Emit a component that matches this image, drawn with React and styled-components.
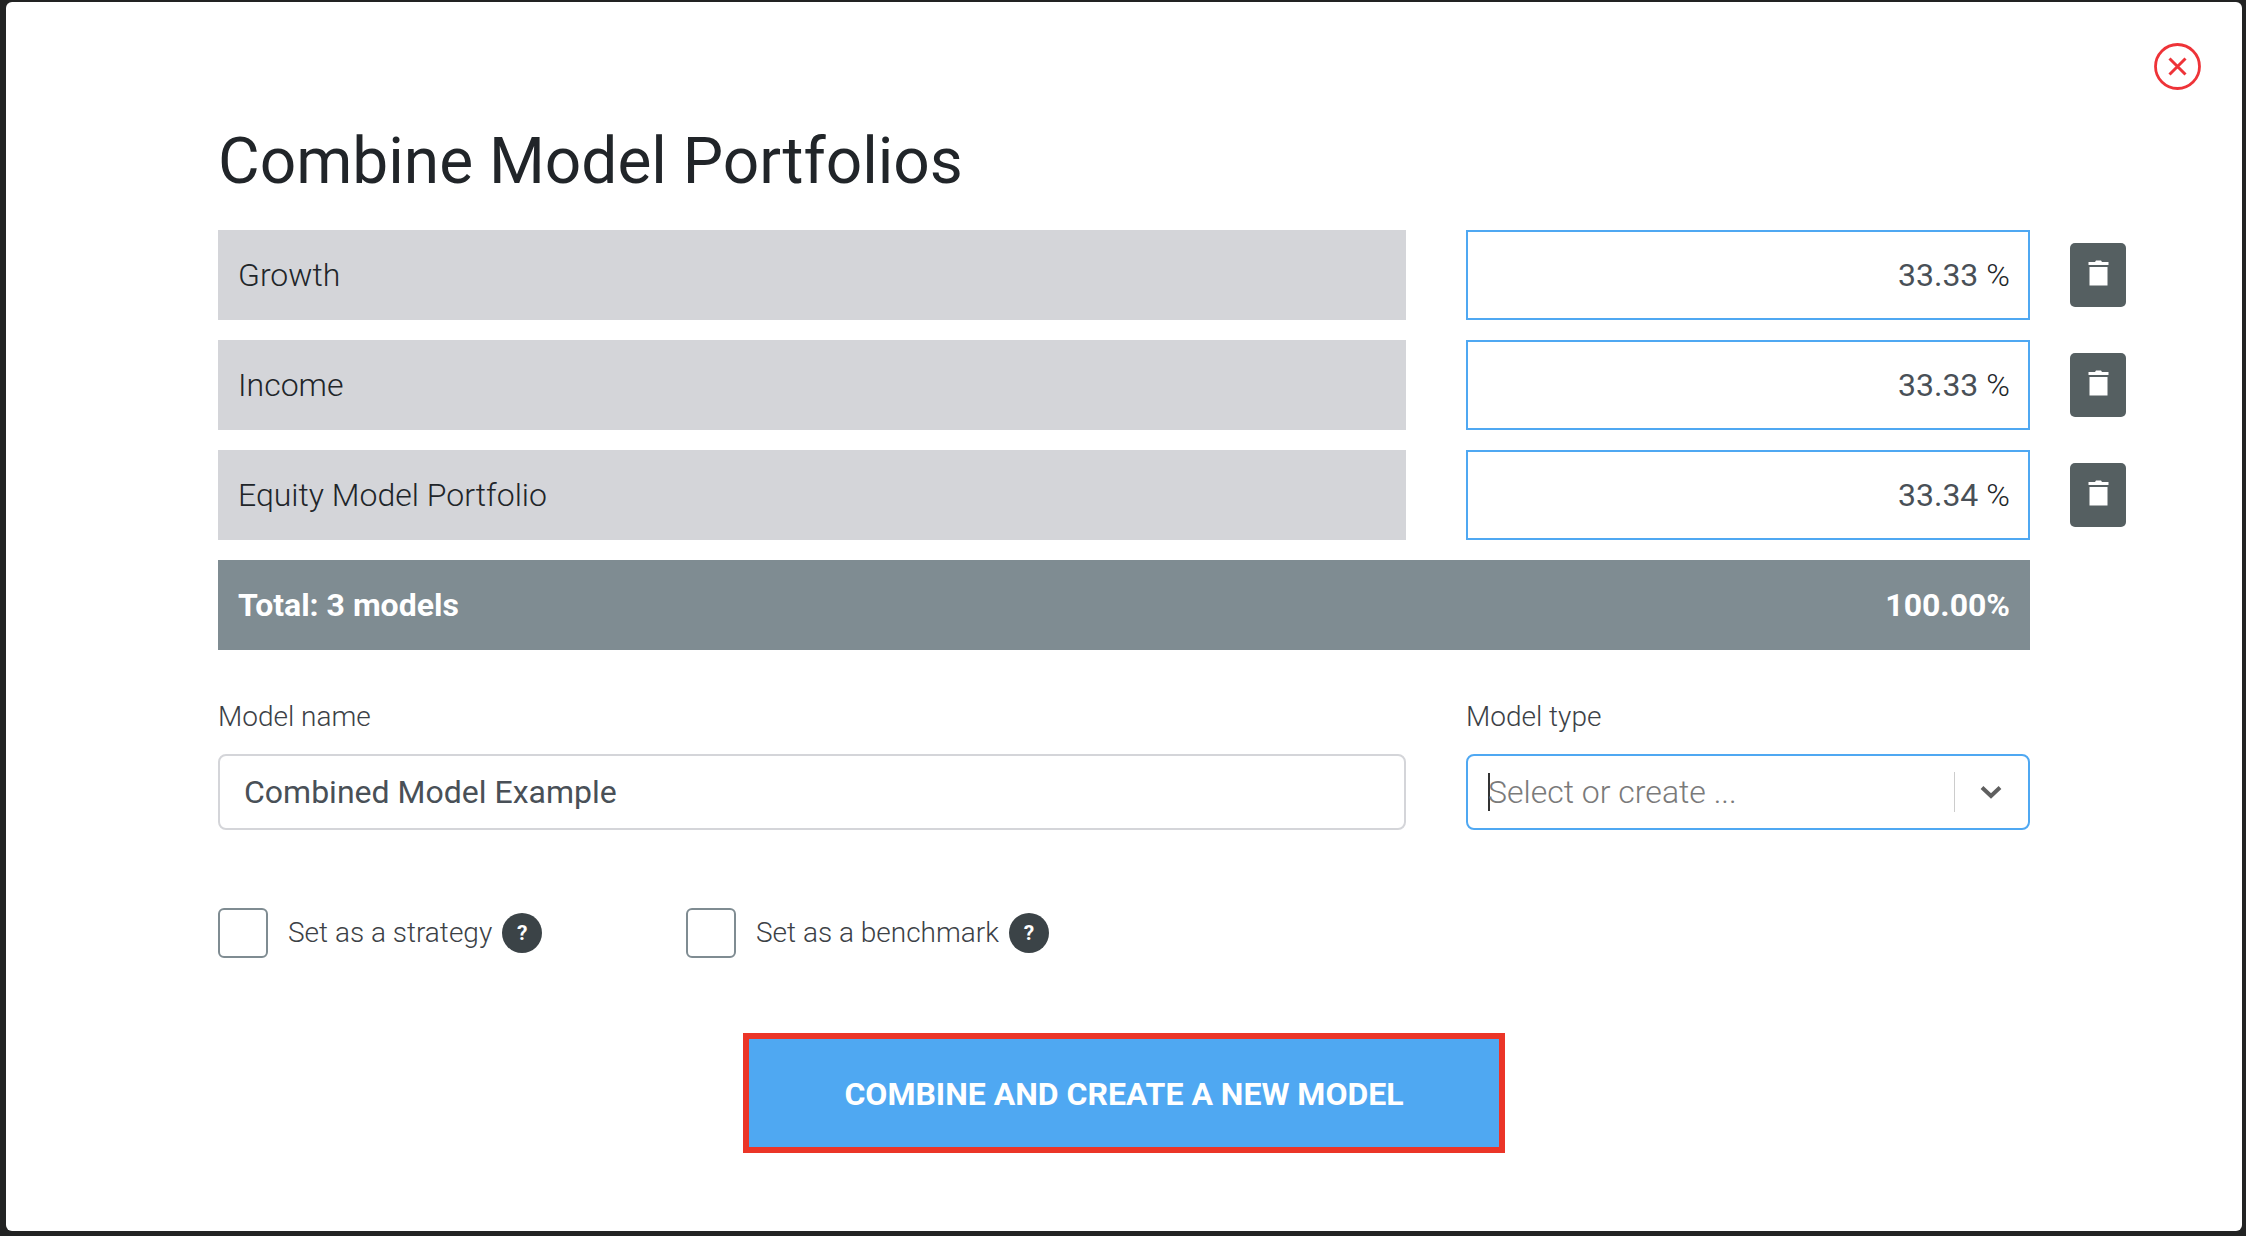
import styled, { createGlobalStyle } from 'styled-components';

const rows = [
    { name: 'Growth', weight: '33.33' },
    { name: 'Income', weight: '33.33' },
    { name: 'Equity Model Portfolio', weight: '33.34' },
];

export default function App() {
    return (
        <>
            <GlobalStyle />
            <Modal>
                <CloseButton aria-label="Close">
                    <svg width="47" height="47" viewBox="0 0 47 47" fill="none" stroke="#ee3338">
                        <circle cx="23.5" cy="23.5" r="22" strokeWidth="2.8" />
                        <path d="M15.5 15.5 L31.5 31.5 M31.5 15.5 L15.5 31.5" strokeWidth="3" />
                    </svg>
                </CloseButton>
                <Title>Combine Model Portfolios</Title>
                <List>
                    {rows.map(row => (
                        <Row key={row.name}>
                            <ModelName>{row.name}</ModelName>
                            <Weight>
                                {row.weight}
                                <Percent>%</Percent>
                            </Weight>
                            <TrashButton aria-label="Remove">
                                <svg width="21" height="26" viewBox="0 0 21 26" fill="#fff">
                                    <path d="M7 2 L8 0.5 H13 L14 2 H20.5 V5 H0.5 V2 Z" />
                                    <rect x="1.5" y="7" width="18" height="18.5" />
                                </svg>
                            </TrashButton>
                        </Row>
                    ))}
                    <TotalBar>
                        <span>Total: 3 models</span>
                        <span>100.00%</span>
                    </TotalBar>
                </List>
                <Fields>
                    <Field>
                        <Label>Model name</Label>
                        <NameInput>Combined Model Example</NameInput>
                    </Field>
                    <Field>
                        <Label>Model type</Label>
                        <SelectBox>
                            <Caret />
                            <Placeholder>Select or create ...</Placeholder>
                            <Divider />
                            <svg width="22" height="14" viewBox="0 0 22 14" fill="none" stroke="#5f5f5f" strokeWidth="4">
                                <path d="M2 2.5 L11 11 L20 2.5" />
                            </svg>
                        </SelectBox>
                    </Field>
                </Fields>
                <Options>
                    <Option>
                        <Checkbox />
                        <OptionLabel>Set as a strategy</OptionLabel>
                        <Help>?</Help>
                    </Option>
                    <Option>
                        <Checkbox />
                        <OptionLabel>Set as a benchmark</OptionLabel>
                        <Help>?</Help>
                    </Option>
                </Options>
                <Actions>
                    <SubmitButton>COMBINE AND CREATE A NEW MODEL</SubmitButton>
                </Actions>
            </Modal>
        </>
    );
}

const GlobalStyle = createGlobalStyle`
    html, body {
        margin: 0;
        height: 1236px;
        background-color: #222323;
        overflow: hidden;
    }
    body {
        font-family: Roboto, "Liberation Sans", sans-serif;
    }
`;

const Modal = styled.div`
    position: relative;
    box-sizing: border-box;
    width: 2236px;
    height: 1229px;
    margin: 2px 0 0 6px;
    padding: 120px 0 0 212px;
    background-color: #FFFFFF;
    border-radius: 6px;
`;

const CloseButton = styled.div`
    position: absolute;
    top: 41px;
    right: 41px;
    width: 47px;
    height: 47px;
`;

const Title = styled.h1`
    margin: 0;
    height: 108px;
    font-size: 64px;
    line-height: 80px;
    font-weight: 400;
    color: #212529;
`;

const List = styled.div`
    display: flex;
    flex-direction: column;
    gap: 20px;
`;

const Row = styled.div`
    display: flex;
    align-items: center;
`;

const ModelName = styled.div`
    box-sizing: border-box;
    width: 1188px;
    height: 90px;
    padding: 0 20px;
    margin-right: 60px;
    display: flex;
    align-items: center;
    background-color: #D4D5D9;
    font-size: 32px;
    font-weight: 300;
    color: #212529;
`;

const Weight = styled.div`
    box-sizing: border-box;
    width: 564px;
    height: 90px;
    padding: 0 18px;
    margin-right: 40px;
    display: flex;
    align-items: center;
    justify-content: flex-end;
    border: 2px solid #4FA8F2;
    font-size: 32px;
    font-weight: 400;
    color: #495057;
`;

const Percent = styled.span`
    margin-left: 8px;
    font-weight: 300;
    color: #212529;
`;

const TrashButton = styled.div`
    width: 56px;
    height: 64px;
    padding-bottom: 4px;
    box-sizing: border-box;
    display: flex;
    align-items: center;
    justify-content: center;
    background-color: #555F61;
    border-radius: 5px;
`;

const TotalBar = styled.div`
    box-sizing: border-box;
    width: 1812px;
    height: 90px;
    padding: 0 20px;
    display: flex;
    align-items: center;
    justify-content: space-between;
    background-color: #7F8C92;
    font-size: 32px;
    font-weight: 700;
    color: #FFFFFF;
`;

const Fields = styled.div`
    display: grid;
    grid-template-columns: 1188px 564px;
    column-gap: 60px;
    margin-top: 49px;
`;

const Field = styled.div`
    display: flex;
    flex-direction: column;
`;

const Label = styled.label`
    height: 55px;
    font-size: 28px;
    line-height: 36px;
    font-weight: 300;
    color: #3c4146;
`;

const NameInput = styled.div`
    box-sizing: border-box;
    height: 76px;
    padding: 0 24px;
    display: flex;
    align-items: center;
    border: 2px solid #D4D5D9;
    border-radius: 8px;
    font-size: 32px;
    color: #495057;
`;

const SelectBox = styled.div`
    box-sizing: border-box;
    height: 76px;
    padding: 0 26px 0 20px;
    display: flex;
    align-items: center;
    border: 2px solid #4FA8F2;
    border-radius: 8px;
`;

const Caret = styled.span`
    width: 1.5px;
    height: 38px;
    margin-right: -1.5px;
    background-color: #333333;
`;

const Placeholder = styled.span`
    flex: 1;
    font-size: 32px;
    font-weight: 300;
    color: #7a7a7a;
`;

const Divider = styled.span`
    width: 1.5px;
    height: 40px;
    margin-right: 25px;
    background-color: #CCCCCC;
`;

const Options = styled.div`
    display: flex;
    margin-top: 78px;
`;

const Option = styled.div`
    width: 468px;
    display: flex;
    align-items: center;
`;

const Checkbox = styled.span`
    box-sizing: border-box;
    width: 50px;
    height: 50px;
    margin-right: 20px;
    border: 2px solid #7F8C92;
    border-radius: 6px;
`;

const OptionLabel = styled.span`
    font-size: 28px;
    font-weight: 300;
    color: #3c4146;
    margin-right: 10px;
    position: relative;
    top: -1px;
`;

const Help = styled.span`
    width: 40px;
    height: 40px;
    display: flex;
    align-items: center;
    justify-content: center;
    border-radius: 50%;
    background-color: #3B4347;
    font-size: 21px;
    font-weight: 700;
    color: #FFFFFF;
`;

const Actions = styled.div`
    width: 1812px;
    margin-top: 75px;
    display: flex;
    justify-content: center;
`;

const SubmitButton = styled.div`
    box-sizing: border-box;
    width: 762px;
    height: 120px;
    padding-top: 2px;
    display: flex;
    align-items: center;
    justify-content: center;
    background-color: #4FA8F2;
    border: 6px solid #EB3528;
    font-size: 32px;
    font-weight: 700;
    color: #FFFFFF;
`;
